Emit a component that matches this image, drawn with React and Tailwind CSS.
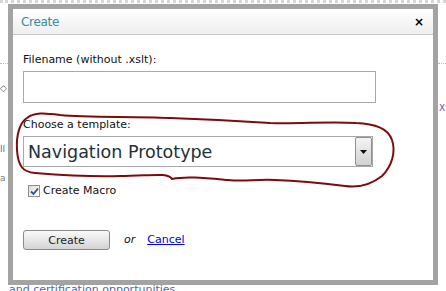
const font = { fontFamily: '"DejaVu Sans", Verdana, sans-serif' };

const Scribble = () => (
  <svg className="absolute left-0 top-0 pointer-events-none" width="446" height="291" viewBox="0 0 446 291">
    <path
      d="M27 118 C 34 112, 45 113, 60 115 C 90 118, 130 116, 170 118 C 200 119, 240 121, 270 123 C 300 124, 330 121, 356 123 C 375 124, 388 128, 392 140 C 396 152, 392 166, 382 176 C 372 184, 360 188, 345 186 C 320 183, 300 181, 275 180 C 255 179, 245 182, 228 180 C 205 178, 185 176, 172 179 C 168 172, 150 176, 120 176 C 90 177, 60 175, 35 173 C 22 172, 18 165, 17 150 C 16 135, 20 122, 27 118"
      fill="none"
      stroke="#7d0b0b"
      strokeWidth="2"
      strokeLinejoin="round"
      strokeLinecap="round"
    />
  </svg>
);

export default function App() {
  return (
    <div className="relative w-[446px] h-[291px] overflow-hidden bg-white" style={font}>
      {/* page behind the dialog */}
      <div className="absolute left-0 top-0 w-[446px] h-[3px] border-t-[3px] border-dotted border-[#d6d6d6]" />
      <div className="absolute left-0 top-[63px] w-[8px] border-t border-dotted border-[#bbb]" />
      <div className="absolute left-[438px] top-[63px] w-[8px] border-t border-dotted border-[#bbb]" />
      <div className="absolute left-0 top-[84px] text-[9px] leading-none text-[#555]">◇</div>
      <div className="absolute left-0 top-[145px] text-[9px] leading-none text-[#5566aa]">ll</div>
      <div className="absolute left-0 top-[174px] text-[9px] leading-none text-[#777]">a</div>
      <div className="absolute left-[439px] top-[104px] text-[9px] leading-none text-[#6655aa]">X</div>
      <div className="absolute left-0 top-[283px] text-[11px] leading-[14px] text-[#5566aa] whitespace-nowrap pl-[9px]">
        and certification opportunities
      </div>

      <div className="relative pt-[4px] pl-[8px]">
        <div className="w-[430px] h-[281px] border-[5px] border-[#a3a3a3] bg-white flex flex-col">
          <div className="h-[26px] flex items-center justify-between pl-[8px] pr-[9px] bg-gradient-to-b from-white to-[#eeeeee] border-b border-[#c8c8c8]">
            <span className="text-[12px] text-[#3a8c9a] tracking-[-0.3px]">Create</span>
            <span className="text-[12px] font-bold text-black leading-none">×</span>
          </div>

          <div className="flex flex-col pl-[10px] pt-[18px]">
            <label className="text-[11px] leading-[14px] text-[#111]">Filename (without .xslt):</label>
            <div className="mt-[4px] w-[353px] h-[32px] border border-[#a9a9a9] bg-white" />

            <label className="mt-[15px] text-[11px] leading-[14px] text-[#111]">Choose a template:</label>
            <div className="mt-[4px] w-[350px] h-[31px] border border-[#a9a9a9] bg-white flex items-center">
              <span className="flex-1 pl-[4px] text-[17.5px] leading-[24px] text-[#22303c] whitespace-nowrap">
                Navigation Prototype
              </span>
              <span className="w-[17px] h-[29px] border border-[#8f8f8f] rounded-[2px] bg-gradient-to-b from-[#f4f4f4] to-[#d2d2d2] flex items-center justify-center">
                <svg width="7" height="4" viewBox="0 0 7 4">
                  <path d="M0 0 H7 L3.5 4 Z" fill="#111" />
                </svg>
              </span>
            </div>

            <div className="mt-[17px] ml-[5px] flex items-center gap-[3px]">
              <span className="w-[12px] h-[12px] border border-[#8e8f8f] bg-gradient-to-br from-[#dcdcdc] to-white flex items-center justify-center">
                <svg width="9" height="9" viewBox="0 0 9 9">
                  <path d="M1 4.5 L3.5 7 L8 1.5" fill="none" stroke="#2a4f9a" strokeWidth="1.8" />
                </svg>
              </span>
              <span className="text-[11px] leading-[14px] text-[#111]">Create Macro</span>
            </div>

            <div className="mt-[32px] flex items-center">
              <button className="w-[87px] h-[20px] border border-[#8a8a8a] rounded-[3px] bg-gradient-to-b from-[#fafafa] to-[#d4d4d4] text-[11px] text-[#222] leading-none">
                Create
              </button>
              <span className="ml-[14px] text-[11px] italic text-[#111]">or</span>
              <a href="#" className="ml-[12px] text-[11px] text-[#0000ee] underline">Cancel</a>
            </div>
          </div>
        </div>
      </div>

      <Scribble />
    </div>
  );
}
